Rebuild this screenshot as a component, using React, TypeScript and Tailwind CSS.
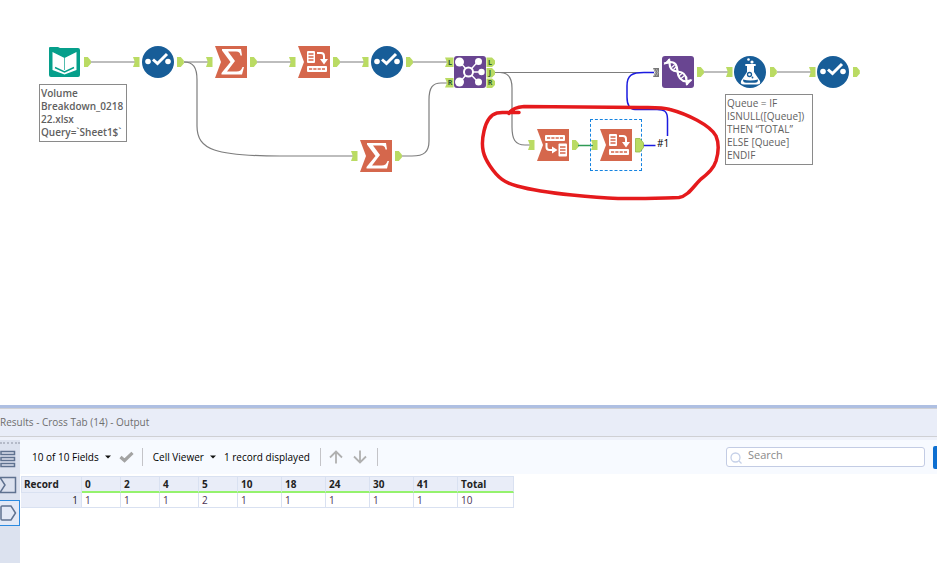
import { useState } from "react";
import type { ReactNode } from "react";
import clsx from "clsx";

type ToolKind =
  | "input"
  | "select"
  | "summarize"
  | "crosstab"
  | "transpose"
  | "join"
  | "union"
  | "formula";

interface Tool {
  id: number;
  kind: ToolKind;
  label: string;
  x: number;
  y: number;
}

interface Field {
  name: string;
  value: string;
  width: string;
}

const tools: Tool[] = [
  { id: 1, kind: "input", label: "Input Data", x: 48, y: 46 },
  { id: 2, kind: "select", label: "Select", x: 142, y: 46 },
  { id: 3, kind: "summarize", label: "Summarize", x: 215, y: 46 },
  { id: 4, kind: "crosstab", label: "Cross Tab", x: 298, y: 46 },
  { id: 5, kind: "select", label: "Select", x: 371, y: 46 },
  { id: 6, kind: "summarize", label: "Summarize", x: 360, y: 140 },
  { id: 7, kind: "join", label: "Join", x: 454, y: 56 },
  { id: 8, kind: "transpose", label: "Transpose", x: 537, y: 129 },
  { id: 14, kind: "crosstab", label: "Cross Tab", x: 600, y: 129 },
  { id: 9, kind: "union", label: "Union", x: 662, y: 56 },
  { id: 10, kind: "formula", label: "Formula", x: 734, y: 56 },
  { id: 11, kind: "select", label: "Select", x: 817, y: 56 },
];

const inputs = [
  [133, 62],
  [206, 62],
  [289, 62],
  [362, 62],
  [351, 156],
  [528, 145],
  [591, 145],
  [726, 72],
  [809, 72],
];

const outputs = [
  [84, 62],
  [177, 62],
  [250, 62],
  [333, 62],
  [406, 62],
  [395, 156],
  [572, 145],
  [697, 72],
  [770, 72],
  [853, 72],
];

const fields: Field[] = [
  { name: "0", value: "1", width: "w-[39px]" },
  { name: "2", value: "1", width: "w-[39px]" },
  { name: "4", value: "1", width: "w-[39px]" },
  { name: "5", value: "2", width: "w-[39px]" },
  { name: "10", value: "1", width: "w-[44px]" },
  { name: "18", value: "1", width: "w-[44px]" },
  { name: "24", value: "1", width: "w-[44px]" },
  { name: "30", value: "1", width: "w-[44px]" },
  { name: "41", value: "1", width: "w-[44px]" },
  { name: "Total", value: "10", width: "w-[56px]" },
];

const FLAG = "M0 0H32V32H0L6 16Z";

function ToolIcon({ kind }: { kind: ToolKind }) {
  switch (kind) {
    case "input":
      return (
        <>
          <path d="M1 2Q1 1 2 1H10L12 2H30Q32 2 32 4V29Q32 31 30 31H3Q1 31 1 29Z" fill="#069f8b" />
          <path d="M4.500 6 16.500 12 28.500 6V24L16.500 28.500 4.500 24Z" fill="#fff" />
          <path d="M16.500 12V24" stroke="#069f8b" strokeWidth="0.700" />
          <path d="M7 21.500 16.500 26 26 21.500" fill="none" stroke="#069f8b" strokeWidth="1.400" />
        </>
      );
    case "select":
      return (
        <>
          <circle cx="16" cy="16" r="16" fill="#175d98" />
          <circle cx="6" cy="15.500" r="2.800" fill="#fff" />
          <circle cx="26" cy="15.500" r="2.800" fill="#fff" />
          <path d="M11 13.500 15.500 17.500 25 8" fill="none" stroke="#fff" strokeWidth="3" />
        </>
      );
    case "summarize":
      return (
        <>
          <path d={FLAG} fill="#d5674c" />
          <path
            d="M7 3H26L27 9.500H25.500C25 6.500 24 5.500 21 5.500H13L20 15 12 25.500H21.500C25 25.500 26.500 24 27.500 21H29L27 28.500H6.500V27L15.500 16 7 4.500Z"
            fill="#fff"
          />
        </>
      );
    case "crosstab":
      return (
        <>
          <path d={FLAG} fill="#d5674c" />
          <rect x="9" y="5" width="8" height="12" rx="1" fill="#fff" />
          <path d="M10.500 8H15.500M10.500 11H15.500M10.500 14H15.500" stroke="#d5674c" strokeWidth="1.300" />
          <path d="M19 7H23Q26 7 26 10V14" fill="none" stroke="#fff" strokeWidth="2" />
          <path d="M22 13H30L26 18.500Z" fill="#fff" />
          <rect x="9" y="20" width="20" height="6" rx="1" fill="#fff" />
          <path d="M11 23H27" stroke="#d5674c" strokeWidth="1.600" strokeDasharray="3.200 1.100" />
        </>
      );
    case "transpose":
      return (
        <>
          <path d={FLAG} fill="#d5674c" />
          <rect x="8" y="6" width="20" height="6" rx="1" fill="#fff" />
          <path d="M10 9H26" stroke="#d5674c" strokeWidth="1.600" strokeDasharray="3.200 1.100" />
          <path d="M9.500 14V18Q9.500 21 12.500 21H16" fill="none" stroke="#fff" strokeWidth="2" />
          <path d="M15 17.500V24.500L20.500 21Z" fill="#fff" />
          <rect x="21.500" y="14.500" width="8.500" height="13" rx="1" fill="#fff" />
          <path d="M23 18H28.500M23 21H28.500M23 24H28.500" stroke="#d5674c" strokeWidth="1.300" />
        </>
      );
    case "join":
      return (
        <>
          <rect width="32" height="32" rx="3" fill="#694591" />
          <path
            d="M6 6 14.500 16 24 5.500M14.500 16 6 26M14.500 16 24 26M14.500 16H27"
            fill="none"
            stroke="#fff"
            strokeWidth="1.400"
          />
          <circle cx="5.500" cy="6" r="4.500" fill="#fff" />
          <circle cx="5.500" cy="26" r="4.500" fill="#fff" />
          <circle cx="24.500" cy="5.500" r="3.500" fill="#fff" />
          <circle cx="27.500" cy="16" r="3.200" fill="#fff" />
          <circle cx="24.500" cy="26" r="3.500" fill="#fff" />
          <circle cx="14.500" cy="16" r="4.500" fill="#694591" stroke="#fff" strokeWidth="2" />
        </>
      );
    case "union":
      return (
        <>
          <rect width="32" height="32" rx="3" fill="#694591" />
          <path
            d="M2 7.500 8 6C14 6 15 10 15.500 15.500S18 25 24.500 25.500L29.500 24"
            fill="none"
            stroke="#fff"
            strokeWidth="2.200"
            strokeLinejoin="round"
          />
          <path
            d="M7 3 7.500 7C7.500 13 10 15 15.500 15.500S24.500 18 24.500 24.500L25 29"
            fill="none"
            stroke="#fff"
            strokeWidth="2.200"
            strokeLinejoin="round"
          />
          <path d="M1.500 8.500 7.500 2V7ZM30.500 23.500 24.500 30V25Z" fill="#fff" />
          <path d="M9.500 11.500 12.500 9M11.500 13.500 14 11M17 20 20 17.500M19 22.500 22.500 19.500" stroke="#fff" strokeWidth="1.200" />
        </>
      );
    case "formula":
      return (
        <>
          <circle cx="16" cy="16" r="16" fill="#175d98" />
          <path d="M13 9H20V16L26 25Q27 28.500 23 28.500H10Q6 28.500 7 25L13 16Z" fill="#fff" />
          <path d="M12 9H21" stroke="#fff" strokeWidth="1.800" strokeLinecap="round" />
          <path d="M9 23.500Q16.500 25.500 24 23.500Q24 26.800 21 26.800H12Q9 26.800 9 23.500Z" fill="#175d98" />
          <circle cx="15.500" cy="18.500" r="2" fill="none" stroke="#175d98" strokeWidth="1.300" />
          <circle cx="18.500" cy="21.500" r="0.900" fill="#175d98" />
          <circle cx="14.500" cy="3.500" r="1.300" fill="#fff" />
          <circle cx="18" cy="6" r="1.600" fill="#fff" />
        </>
      );
  }
}

function InputAnchor({ x, y }: { x: number; y: number }) {
  return <path d={`M${x} ${y - 5}h6.500v10h-6.500l1.800 -5z`} fill="#badb63" />;
}

function OutputAnchor({ x, y }: { x: number; y: number }) {
  return <path d={`M${x} ${y - 5}h3.800l3 3.400v3.200l-3 3.400h-3.800z`} fill="#badb63" />;
}

function AnchorLabel({ x, y, children }: { x: number; y: number; children: ReactNode }) {
  return (
    <text x={x} y={y} textAnchor="middle" className="fill-[#2c5a35] text-[7px] font-bold">
      {children}
    </text>
  );
}

function Connections() {
  return (
    <svg className="pointer-events-none absolute inset-0 h-full w-full">
      <g fill="none" stroke="#7d7d7d" strokeWidth="1.200">
        <path d="M90 62H135M184 62H208M256 62H291M339 62H364M412 62H447" />
        <path d="M184 62C193 62 197 67 197 80V126C197 150 216 156 280 156H353" />
        <path d="M401 156H412C424 156 429 152 429 141V100C429 87 433 83 441 83H447" />
        <path d="M495 72.500H654" />
        <path d="M495 72.500H500C508 72.500 512 77 512 88V127C512 139 515 145 525 145H530" />
        <path d="M703 72H728M777 72H811" />
      </g>
      {inputs.map(([x, y]) => (
        <InputAnchor key={`in-${x}-${y}`} x={x} y={y} />
      ))}
      {outputs.map(([x, y]) => (
        <OutputAnchor key={`out-${x}-${y}`} x={x} y={y} />
      ))}
      <path d="M578 145.500H593" stroke="#2f9b55" strokeWidth="1.500" />
      <g fill="none" stroke="#1b1be0" strokeWidth="1.500">
        <path d="M643 145.500H655.500" />
        <path d="M667.500 136V119C667.500 111 664 109.500 657 109.500H635C629 109 627 105 627 97V86C627 75 632 72.500 644 72.500H654" />
      </g>
      <g fill="#badb63">
        <path d="M445 57.500H453.500V67H445L447 62.500ZM445 78H453.500V87.500H445L447 83Z" />
        <path d="M486.500 57.500H492L495 60.500V64L492 67H486.500ZM486.500 68H492L495 71V74.500L492 77.500H486.500ZM486.500 78.500H492L495 81V85L492 88H486.500Z" />
      </g>
      <AnchorLabel x={450} y={65}>L</AnchorLabel>
      <AnchorLabel x={450} y={85}>R</AnchorLabel>
      <AnchorLabel x={490} y={65}>L</AnchorLabel>
      <AnchorLabel x={490} y={75}>J</AnchorLabel>
      <AnchorLabel x={490} y={85}>R</AnchorLabel>
      <path d="M653 68H659V77H653L655 72.500Z" fill="#777" />
      <path d="M654 69 656 72.500 654 76M656.500 69 658 72.500 656.500 76" fill="none" stroke="#ccc" strokeWidth="0.700" />
    </svg>
  );
}

function InkMarkup() {
  return (
    <svg className="pointer-events-none absolute inset-0 h-full w-full">
      <path d="M635.500 138.500H640L643.500 143V147.500L640 152H635.500Z" fill="#badb63" stroke="#93b845" strokeWidth="0.800" />
      <path
        d="M519 112.500C510 112 503 112 497 113C489 115 486 122 484 131C480 148 484 157 490 166C498 178 505 183 517 186C535 191 552 193 572 195C590 197 600 198 618 198.500C640 199 660 198 679 197.500C688 196 693 187 700 180C707 174 713 170 716 161C719 151 719 143 716 136C710 125 687 114 670 109.500C662 107 655 107.500 640 107.500L524 106.500C516 107 511 110 509 113.500"
        fill="none"
        stroke="#e51a1c"
        strokeWidth="3.500"
        strokeLinecap="round"
        strokeLinejoin="round"
      />
    </svg>
  );
}

function Annotation({ x, y, lines, bold }: { x: number; y: number; lines: string[]; bold?: boolean }) {
  return (
    <div
      className={clsx(
        "absolute w-[88px] border border-[#8a8a8a] bg-white px-px py-0.5 text-[10px] leading-[13px] whitespace-nowrap text-[#606060]",
        bold ? "font-semibold" : "font-medium"
      )}
      style={{ left: x, top: y }}
    >
      {lines.map((line) => (
        <p key={line}>{line}</p>
      ))}
    </div>
  );
}

function WorkflowCanvas() {
  const [activeId, setActiveId] = useState(14);

  return (
    <main className="relative h-[72vh] min-h-[210px] shrink-0 overflow-hidden bg-white">
      <Connections />
      {tools.map((tool) => (
        <button
          key={tool.id}
          type="button"
          aria-label={tool.label}
          onClick={() => setActiveId(tool.id)}
          className={clsx(
            "absolute size-8",
            tool.id === activeId && "outline-1 outline-offset-[9px] outline-dashed outline-[#1583e0]"
          )}
          style={{ left: tool.x, top: tool.y }}
        >
          <svg viewBox="0 0 32 32" className="size-8">
            <ToolIcon kind={tool.kind} />
          </svg>
        </button>
      ))}
      <Annotation
        x={39}
        y={84}
        bold
        lines={["Volume", "Breakdown_0218", "22.xlsx", "Query=`Sheet1$`"]}
      />
      <Annotation
        x={725}
        y={94}
        lines={["Queue = IF", "ISNULL([Queue])", "THEN “TOTAL”", "ELSE [Queue]", "ENDIF"]}
      />
      <span className="absolute top-[136px] left-[657px] text-[10px] leading-[14px] font-medium text-black">#1</span>
      <InkMarkup />
    </main>
  );
}

function Caret() {
  return (
    <svg viewBox="0 0 6 4" className="h-1 w-1.5">
      <path d="M0 0.500H6L3 3.500Z" fill="#111" />
    </svg>
  );
}

function Sidebar() {
  return (
    <nav className="flex w-5 shrink-0 flex-col bg-[#dce2ef] pt-0.5">
      <span className="h-1 border-t-2 border-dotted border-[#b4bac8]" />
      <button type="button" aria-label="Messages" className="flex h-[26px] items-center">
        <svg viewBox="0 0 16 18" className="h-[18px] w-4" fill="none" stroke="#5f7290" strokeWidth="1.500">
          <path d="M1 1.500H14.500V4.500H1ZM1 7.500H14.500V10.500H1ZM1 13.500H14.500V16.500H1Z" />
        </svg>
      </button>
      <button type="button" aria-label="Input" className="flex h-[26px] items-center">
        <svg viewBox="0 0 17 18" className="h-[18px] w-[17px]" fill="none" stroke="#5f7290" strokeWidth="1.500">
          <path d="M0 1.500H15.500V16.500H0L5 9Z" />
        </svg>
      </button>
      <button
        type="button"
        aria-label="Output"
        className="mt-0.5 flex h-[26px] items-center border border-l-0 border-[#2b8ae0] bg-[#e3e9f6]"
      >
        <svg viewBox="0 0 17 18" className="h-[18px] w-[17px]" fill="none" stroke="#5f7290" strokeWidth="1.500">
          <path d="M2 2H11L15.500 9 11 16H2Q1 16 1 15V3Q1 2 2 2Z" />
        </svg>
      </button>
    </nav>
  );
}

function Toolbar() {
  return (
    <div className="flex h-[34px] items-center bg-[#f7faff] pl-3 text-[10px] whitespace-nowrap text-black">
      <button type="button" className="flex items-center gap-1.5">
        10 of 10 Fields
        <Caret />
      </button>
      <button type="button" aria-label="Apply" className="ml-2">
        <svg viewBox="0 0 15 12" className="h-3 w-[15px]">
          <path d="M1.500 6 5.500 9.500 13.500 1.800" fill="none" stroke="#a3a3a3" strokeWidth="3.200" />
        </svg>
      </button>
      <span className="ml-2 h-[18px] w-px bg-[#c4c4c8]" />
      <button type="button" className="ml-2.5 flex items-center gap-1.5">
        Cell Viewer
        <Caret />
      </button>
      <span className="ml-2">1 record displayed</span>
      <span className="ml-2.5 h-[18px] w-px bg-[#c4c4c8]" />
      <button type="button" aria-label="Previous" className="ml-2">
        <svg viewBox="0 0 14 14" className="size-3.5" fill="none" stroke="#b0b0b0" strokeWidth="1.800">
          <path d="M7 13.500V1.500M1 7.500 7 1.500 13 7.500" />
        </svg>
      </button>
      <button type="button" aria-label="Next" className="ml-2.5">
        <svg viewBox="0 0 14 14" className="size-3.5" fill="none" stroke="#b0b0b0" strokeWidth="1.800">
          <path d="M7 0.500V12.500M1 6.500 7 12.500 13 6.500" />
        </svg>
      </button>
      <span className="ml-2.5 h-[18px] w-px bg-[#c4c4c8]" />
      <label className="ml-auto flex h-5 w-[199px] items-center gap-1.5 rounded-[3px] border border-[#c3cce4] bg-white pl-[3px]">
        <svg viewBox="0 0 12 12" className="mt-0.5 size-3" fill="none" stroke="#c5d0e8" strokeWidth="1.300">
          <circle cx="5.500" cy="5.500" r="4.500" />
          <path d="M9 9 11.500 11.500" />
        </svg>
        <input
          type="search"
          aria-label="Search"
          placeholder="Search"
          className="min-w-0 flex-1 pb-1 text-[11px] outline-none placeholder:text-[#8a8a8a]"
        />
      </label>
      <button type="button" aria-label="Actions" className="ml-2 h-[23px] w-1 rounded-l-[2px] bg-[#0d6fd1]" />
    </div>
  );
}

function ResultsTable() {
  return (
    <table className="mt-0.5 ml-px w-[493px] table-fixed border-separate border-spacing-0 text-left text-[10px] leading-[13px] text-[#222]">
      <thead>
        <tr>
          <th className="h-[17px] w-[61px] border border-[#d9e1f1] bg-[#e9edf8] px-0.5 font-bold">Record</th>
          {fields.map((field) => (
            <th
              key={field.name}
              className={clsx(
                "h-[17px] border-t border-r border-b-2 border-t-[#d9e1f1] border-r-[#d9e1f1] border-b-[#95f26d] bg-[#e9edf8] px-[3px] font-bold",
                field.width
              )}
            >
              {field.name}
            </th>
          ))}
        </tr>
      </thead>
      <tbody>
        <tr>
          <td className="h-[15px] border-r border-b border-[#d9e1f1] bg-[#e9edf8] px-[3px] text-right">1</td>
          {fields.map((field) => (
            <td
              key={field.name}
              className="h-[15px] border-r border-b border-[#d9e1f1] bg-white px-[3px] text-[#4b3355]"
            >
              {field.value}
            </td>
          ))}
        </tr>
      </tbody>
    </table>
  );
}

export default function App() {
  return (
    <div className="flex min-h-screen flex-col overflow-hidden bg-white font-['Open_Sans','Noto_Sans',sans-serif]">
      <WorkflowCanvas />
      <section className="flex flex-1 flex-col border-t-[3px] border-[#aebfe2]">
        <h2 className="flex h-[29px] items-center border-y border-[#cfd0d4] bg-[#e9edf8] text-[10px] text-[#6e6e6e]">
          Results - Cross Tab (14) - Output
        </h2>
        <div className="flex flex-1 border-t-[3px] border-[#eef1fa]">
          <Sidebar />
          <div className="min-w-0 flex-1">
            <Toolbar />
            <ResultsTable />
          </div>
        </div>
      </section>
    </div>
  );
}
